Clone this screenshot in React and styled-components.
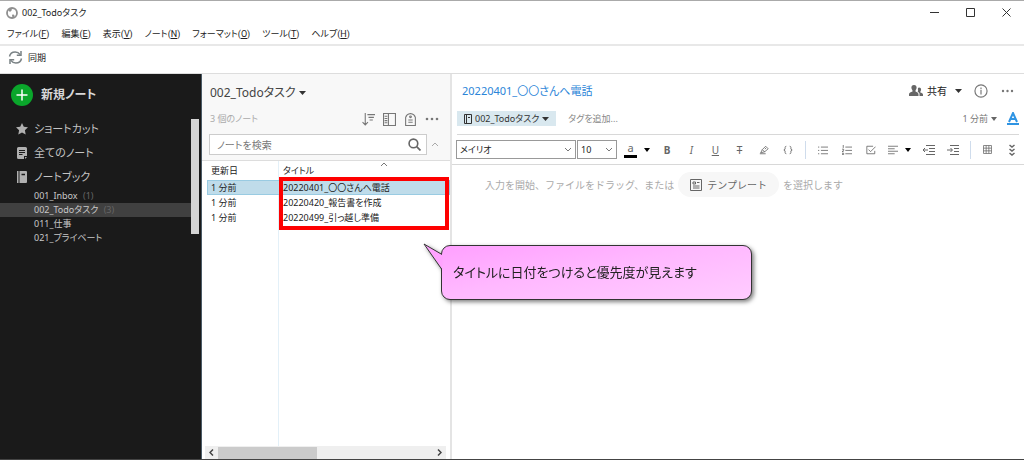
import React, { useState } from "react";
import styled, { createGlobalStyle, css } from "styled-components";

const GlobalStyle = createGlobalStyle`
  * { box-sizing: border-box; }
  body {
    margin: 0;
    background: #fff;
    color: #222;
    font-family: "Noto Sans", "Noto Sans CJK JP", sans-serif;
    font-feature-settings: "palt";
    font-size: 11px;
    line-height: 16px;
  }
  button, input, select {
    margin: 0;
    padding: 0;
    border: 0;
    background: none;
    color: inherit;
    font: inherit;
    font-feature-settings: inherit;
  }
  a { color: inherit; text-decoration: none; }
  svg { display: block; flex: none; }
`;

const Window = styled.div`
  position: relative;
  display: flex;
  flex-direction: column;
  min-height: 100vh;
  border-top: 1px solid #aaa;
  border-bottom: 1px solid #444;
`;

const TitleBar = styled.header`
  display: flex;
  align-items: center;
  height: 23px;
  padding-left: 6px;

  h1 {
    flex: 1;
    margin: 0 0 0 4px;
    font-size: 9px;
    font-weight: 400;
  }
`;

const WindowButton = styled.button`
  display: flex;
  align-items: center;
  justify-content: center;
  width: 36px;
  height: 22px;
`;

const MenuBar = styled.nav`
  display: flex;
  gap: 12px;
  height: 22px;
  padding: 2px 7px;
  border-bottom: 2px solid #e8e8e8;
  font-family: Roboto, "Noto Sans CJK JP", sans-serif;
  font-size: 9px;
`;

const SyncBar = styled.div`
  display: flex;
  align-items: center;
  height: 28px;
  padding: 0 8px 4px;
  border-bottom: 1px solid #ddd;
`;

const SyncButton = styled.button`
  display: flex;
  align-items: center;
  gap: 5px;
  font-size: 9px;
`;

const Body = styled.div`
  display: flex;
  flex: 1;
`;

const Sidebar = styled.aside`
  display: flex;
  width: 202px;
  flex: none;
  background: #1a1a1a;
  border-right: 1px solid #4a5a66;
  color: #c4c4c4;
`;

const SidebarContent = styled.div`
  flex: 1;
  padding-top: 8px;
`;

const NewNote = styled.button`
  display: flex;
  align-items: center;
  gap: 8px;
  height: 26px;
  margin-bottom: 9px;
  padding-left: 11px;
  color: #d8d8d8;
  font-size: 12px;
  font-weight: 600;
`;

const SideLink = styled.a`
  display: flex;
  align-items: center;
  gap: 6px;
  height: 24px;
  padding-left: 16px;
  font-size: 11px;
`;

const Notebook = styled.a`
  display: block;
  height: 14px;
  padding-left: 34px;
  line-height: 14px;
  font-size: 9px;
  color: #c8c8c8;

  ${({ $selected }) =>
    $selected &&
    css`
      background: #404040;
    `}

  span {
    margin-left: 3px;
    color: #666;
  }
`;

const SideScroll = styled.div`
  width: 8px;
  height: 115px;
  margin: 45px 2px 0 0;
  background: #d4d4d4;
`;

const ListPane = styled.section`
  display: flex;
  flex-direction: column;
  width: 250px;
  flex: none;
  border-right: 2px solid #e4e4e4;
`;

const ListHeader = styled.div`
  display: flex;
  flex-direction: column;
  padding: 8px 11px 5px 7px;
  background: #f8f8f8;
  border-bottom: 1px solid #ddd;
`;

const ListTitle = styled.button`
  display: flex;
  align-items: center;
  align-self: flex-start;
  gap: 3px;
  height: 22px;
  padding-left: 1px;
  color: #444;
  font-size: 12px;
`;

const CountRow = styled.div`
  display: flex;
  align-items: center;
  gap: 8px;
  height: 30px;
  padding-left: 1px;
  color: #aaa;
  font-size: 9px;

  > span { flex: 1; }
`;

const IconButton = styled.button`
  display: flex;
  align-items: center;
  justify-content: center;
  color: ${({ $color }) => $color || "#777"};
`;

const SearchRow = styled.div`
  display: flex;
  align-items: center;
  gap: 4px;
  color: #666;
`;

const SearchBox = styled.label`
  display: flex;
  align-items: center;
  flex: 1;
  height: 21px;
  padding: 0 5px 0 7px;
  background: #fff;
  border: 1px solid #ccc;

  input {
    flex: 1;
    min-width: 0;
    outline: 0;
    font-size: 10px;
  }
  input::placeholder { color: #777; }
`;

const TableArea = styled.div`
  position: relative;
  flex: 1;
  margin-left: 5px;
  background: linear-gradient(#e3f0f8, #e3f0f8) 71px 0 / 1px 100% no-repeat;
`;

const NoteTable = styled.table`
  width: 100%;
  table-layout: fixed;
  border-collapse: collapse;
  font-size: 9px;
  line-height: 15px;
  color: #222;

  th, td {
    height: 15px;
    padding: 0 4px;
    text-align: left;
    font-weight: 400;
    white-space: nowrap;
  }
  th { height: 19px; }
  th:first-child { width: 72px; }
  th svg { position: absolute; top: 1px; left: 173px; }
`;

const NoteRow = styled.tr`
  background: ${({ $selected }) => ($selected ? "#bfdcea" : "none")};
  outline: ${({ $selected }) => ($selected ? "1px solid #99cbe2" : "none")};
  outline-offset: -1px;
`;

const Highlight = styled.div`
  position: absolute;
  top: 16px;
  left: 72px;
  right: 1px;
  height: 53px;
  border: 4px solid #fe0000;
  pointer-events: none;
`;

const BottomScroll = styled.div`
  display: flex;
  align-items: center;
  height: 13px;
  margin: 0 4px 0 3px;
  background: #efefef;

  button { width: 13px; display: flex; justify-content: center; }
  div { flex: 1; height: 12px; }
  div::before {
    content: "";
    display: block;
    width: 46%;
    height: 12px;
    background: #cbcbcb;
  }
`;

const Editor = styled.main`
  flex: 1;
  min-width: 0;
`;

const EditorHead = styled.div`
  display: flex;
  align-items: center;
  height: 33px;
  padding: 0 10px;

  h2 {
    flex: 1;
    margin: 0;
    color: #2b85d8;
    font-size: 11px;
    font-weight: 400;
  }
`;

const ShareButton = styled.button`
  display: flex;
  align-items: center;
  gap: 4px;
  margin-right: 12px;
  font-size: 10px;

  svg:last-child { margin-left: 4px; }
`;

const MetaRow = styled.div`
  display: flex;
  align-items: center;
  height: 28px;
  margin: 0 5px;
  padding-bottom: 4px;
  border-bottom: 1px solid #d8d8d8;
  font-size: 9px;
`;

const NotebookTag = styled.button`
  display: flex;
  align-items: center;
  gap: 3px;
  height: 15px;
  margin-right: 12px;
  padding: 0 7px;
  background: #d9e8ef;
  color: #333;
`;

const TagInput = styled.input`
  flex: 1;
  min-width: 0;
  outline: 0;
  &::placeholder { color: #888; }
`;

const Updated = styled.button`
  display: flex;
  align-items: center;
  gap: 3px;
  margin-right: 10px;
  color: #777;
`;

const FormatBar = styled.div`
  display: flex;
  align-items: center;
  height: 30px;
  padding: 0 5px 0 4px;
  border-bottom: 1px solid #d8d8d8;
  font-size: 10px;
`;

const SelectBox = styled.span`
  position: relative;
  width: ${({ $width }) => $width}px;
  height: 19px;
  margin-right: 1px;
  border: 1px solid #999;

  select {
    width: 100%;
    height: 17px;
    padding-left: 3px;
    appearance: none;
    font-size: 9px;
    line-height: 16px;
  }
  svg { position: absolute; top: 6px; right: 3px; pointer-events: none; }
`;

const FormatButtons = styled.div`
  display: flex;
  align-items: center;
  justify-content: space-between;
  flex: 1;
  margin-left: 6px;
  color: #666;
`;

const FormatButton = styled(IconButton)`
  gap: 7px;
  height: 18px;
  min-width: 14px;
  color: #666;
`;

const TextColor = styled.span`
  width: 13px;
  height: 16px;
  border-bottom: 3px solid #000;
  font-size: 11px;
  line-height: 12px;
`;

const Divider = styled.span`
  width: 1px;
  height: 18px;
  background: #cfdcec;
`;

const NoteBody = styled.div`
  display: flex;
  align-items: center;
  gap: 4px;
  padding: 7px 0 0 33px;
  color: #aaa;
  font-size: 10px;
  font-feature-settings: normal;
`;

const TemplateButton = styled.button`
  display: flex;
  align-items: center;
  gap: 5px;
  height: 25px;
  padding: 0 12px;
  background: #f7f7f7;
  border-radius: 13px;
  color: #666;
`;

const Callout = styled.div`
  position: absolute;
  top: 244px;
  left: 441px;
  width: 311px;
  padding: 18px 11px;
  border: 1px solid #333;
  border-radius: 9px;
  background: linear-gradient(170deg, #ffa0ff, #ffb8ff 45%, #ffccff);
  filter: drop-shadow(2px 2px 2px rgba(0, 0, 0, 0.5));
  color: #222;
  font-size: 13px;
  line-height: 17px;

  p { margin: 0; white-space: nowrap; }
  svg { position: absolute; top: -3px; left: -19px; }
`;

const Caret = ({ color = "#333", size = 7 }) => (
  <svg width={size} height="4" viewBox="0 0 8 4" preserveAspectRatio="none">
    <path d="M0 0h8L4 4z" fill={color} />
  </svg>
);

const Chevron = ({ up, color = "#777" }) => (
  <svg width="8" height="5" viewBox="0 0 8 5" fill="none" stroke={color}>
    <path d={up ? "M1 4l3-3 3 3" : "M1 1l3 3 3-3"} />
  </svg>
);

const Dots = () => (
  <svg width="14" height="4" viewBox="0 0 14 4" fill="currentColor">
    <circle cx="2" cy="2" r="1.3" />
    <circle cx="7" cy="2" r="1.3" />
    <circle cx="12" cy="2" r="1.3" />
  </svg>
);

const Glyph = ({ size = 12, width, children }) => (
  <svg
    width={size}
    height={size}
    viewBox="0 0 12 12"
    fill="none"
    stroke="currentColor"
    strokeWidth={width || 1}
  >
    {children}
  </svg>
);

const menus = [
  ["ファイル", "F"],
  ["編集", "E"],
  ["表示", "V"],
  ["ノート", "N"],
  ["フォーマット", "O"],
  ["ツール", "T"],
  ["ヘルプ", "H"],
];

const notebooks = [
  { name: "001_Inbox", count: 1 },
  { name: "002_Todoタスク", count: 3 },
  { name: "011_仕事" },
  { name: "021_プライベート" },
];

const notes = ["20220401_〇〇さんへ電話", "20220420_報告書を作成", "20220499_引っ越し準備"];

const App = () => {
  const [notebook, setNotebook] = useState(1);
  const [note, setNote] = useState(0);

  return (
    <>
      <GlobalStyle />
      <Window>
        <TitleBar>
          <svg width="12" height="12" viewBox="0 0 12 12">
            <circle cx="6" cy="6" r="5" fill="#fff" stroke="#8f8f8f" strokeWidth="1.8" />
            <path d="M2 3l3-2 1 2-2 2zM6 8c1-.8 2-.6 2.500.3L8 11H6.500z" fill="#8f8f8f" />
          </svg>
          <h1>002_Todoタスク</h1>
          <WindowButton aria-label="最小化">
            <svg width="9" height="9" stroke="#333"><path d="M0 4.500h9" /></svg>
          </WindowButton>
          <WindowButton aria-label="最大化">
            <svg width="9" height="9" fill="none" stroke="#333"><path d="M.5.5h8v8h-8z" /></svg>
          </WindowButton>
          <WindowButton aria-label="閉じる">
            <svg width="9" height="9" stroke="#333"><path d="M.5.5l8 8M8.500.5l-8 8" /></svg>
          </WindowButton>
        </TitleBar>

        <MenuBar>
          {menus.map(([label, key]) => (
            <a href="#menu" key={key}>{label}(<u>{key}</u>)</a>
          ))}
        </MenuBar>

        <SyncBar>
          <SyncButton>
            <svg width="15" height="15" viewBox="0 0 15 15" fill="none" stroke="#7a8285" strokeWidth="1.500">
              <path d="M1.500 6.500C2 3.800 4.200 2 7.200 2c2 0 3.700.8 5 2.600M13.500 8.500c-.5 2.700-2.700 4.500-5.700 4.500-2 0-3.700-.8-5-2.600" />
              <path d="M13 1v4.200H8.800M2 14V9.800h4.200" />
            </svg>
            同期
          </SyncButton>
        </SyncBar>

        <Body>
          <Sidebar>
            <SidebarContent>
              <NewNote>
                <svg width="22" height="22" viewBox="0 0 22 22">
                  <circle cx="11" cy="11" r="11" fill="#0aa62b" />
                  <path d="M11 5.500v11M5.500 11h11" stroke="#fff" strokeWidth="1.500" />
                </svg>
                新規ノート
              </NewNote>
              <SideLink href="#shortcuts">
                <svg width="12" height="12" viewBox="0 0 12 12" fill="#b0b0b0">
                  <path d="M6 0l1.800 3.800 4.200.5-3.100 2.900.8 4.300L6 9.400l-3.700 2.100.8-4.300L0 4.300l4.200-.5z" />
                </svg>
                ショートカット
              </SideLink>
              <SideLink href="#notes">
                <svg width="12" height="12" viewBox="0 0 12 12">
                  <path d="M2.500 0h7q1.500 0 1.500 1.500V9H8v3H2.500Q1 12 1 10.500v-9Q1 0 2.500 0zM9 10h2l-2 2z" fill="#b0b0b0" />
                  <path d="M3 3.500h6M3 5.500h6M3 7.500h3.500" stroke="#1a1a1a" />
                </svg>
                全てのノート
              </SideLink>
              <SideLink href="#notebooks">
                <svg width="12" height="12" viewBox="0 0 12 12">
                  <path d="M1 0h1.500v12H1zM3.500 0H10q1 0 1 1v10q0 1-1 1H3.500z" fill="#b0b0b0" />
                  <path d="M5.500 3.500H9" stroke="#1a1a1a" strokeWidth="1.500" />
                </svg>
                ノートブック
              </SideLink>
              {notebooks.map(({ name, count }, i) => (
                <Notebook
                  href={`#notebook-${i}`}
                  key={name}
                  $selected={i === notebook}
                  onClick={() => setNotebook(i)}
                >
                  {name} {count && <span>({count})</span>}
                </Notebook>
              ))}
            </SidebarContent>
            <SideScroll />
          </Sidebar>

          <ListPane>
            <ListHeader>
              <ListTitle>002_Todoタスク<Caret /></ListTitle>
              <CountRow>
                <span>3 個のノート</span>
                <IconButton aria-label="並べ替え">
                  <Glyph size={13}><path d="M3 0v11M.5 8.500L3 11l2.500-2.500M5 1.500h7M6 4h5M7 6.500h3" /></Glyph>
                </IconButton>
                <IconButton aria-label="表示">
                  <Glyph size={13}><path d="M.5.5h11v11H.5zM5 .5v11M1.500 3H4M1.500 5H4M1.500 7H4M1.500 9H4" /></Glyph>
                </IconButton>
                <IconButton aria-label="タグ">
                  <Glyph size={13}>
                    <path d="M1.500 11.500V4Q2.500 1 6 .5 9.500 1 10.500 4v7.500zM4 6.500h4M4 8.500h4" />
                    <circle cx="6" cy="3.500" r=".8" />
                  </Glyph>
                </IconButton>
                <IconButton aria-label="その他"><Dots /></IconButton>
              </CountRow>
              <SearchRow>
                <SearchBox>
                  <input aria-label="ノートを検索" placeholder="ノートを検索" />
                  <Glyph size={13} width={1.5}>
                    <circle cx="5" cy="5" r="4" />
                    <path d="M8 8l3.500 3.500" />
                  </Glyph>
                </SearchBox>
                <IconButton aria-label="閉じる"><Chevron up color="#aaa" /></IconButton>
              </SearchRow>
            </ListHeader>
            <TableArea>
              <NoteTable>
                <thead>
                  <tr><th>更新日</th><th>タイトル<Chevron up /></th></tr>
                </thead>
                <tbody>
                  {notes.map((title, i) => (
                    <NoteRow key={title} $selected={i === note} onClick={() => setNote(i)}>
                      <td>1 分前</td>
                      <td>{title}</td>
                    </NoteRow>
                  ))}
                </tbody>
              </NoteTable>
              <Highlight />
            </TableArea>
            <BottomScroll>
              <button aria-label="左へ">
                <svg width="5" height="7" fill="none" stroke="#444" strokeWidth="1.500"><path d="M4 .5l-3 3 3 3" /></svg>
              </button>
              <div />
              <button aria-label="右へ">
                <svg width="5" height="7" fill="none" stroke="#444" strokeWidth="1.500"><path d="M1 .5l3 3-3 3" /></svg>
              </button>
            </BottomScroll>
          </ListPane>

          <Editor>
            <EditorHead>
              <h2>{notes[note]}</h2>
              <ShareButton>
                <svg width="14" height="12" viewBox="0 0 14 12" fill="#666">
                  <path d="M5 0c1.800 0 2.700 1.200 2.600 2.800C7.500 4 7 4.800 6.500 5.400v1.200c1.500.6 3 1.200 3 2.600V11H0V9.200C0 7.800 1.800 7.200 3.500 6.600V5.400C3 4.800 2.500 4 2.400 2.800 2.300 1.200 3.200 0 5 0z" />
                  <path d="M10 2.500c1.400 0 2.100.8 2.100 2.100 0 1-.4 1.600-.8 2.100v.8c1.200.4 2.700.9 2.700 2V11h-3.500V9c0-1-.8-1.800-1.800-2.300.5-.8.500-1.500.2-2.200C8.800 3.200 9.200 2.500 10 2.500z" />
                </svg>
                共有
                <Caret />
              </ShareButton>
              <IconButton aria-label="ノート情報">
                <Glyph size={14}>
                  <circle cx="6" cy="6" r="5.200" />
                  <path d="M6 5v4M6 3v1.200" />
                </Glyph>
              </IconButton>
              <IconButton aria-label="その他">
                <svg width="26" height="4" viewBox="0 0 26 4" fill="currentColor">
                  <circle cx="15" cy="2" r="1.200" />
                  <circle cx="19.500" cy="2" r="1.200" />
                  <circle cx="24" cy="2" r="1.200" />
                </svg>
              </IconButton>
            </EditorHead>

            <MetaRow>
              <NotebookTag>
                <svg width="8" height="10" viewBox="0 0 8 10" fill="none" stroke="#333">
                  <path d="M.5.5h7v9h-7zM2.500.5v9M4 3.500h2" />
                </svg>
                002_Todoタスク
                <Caret />
              </NotebookTag>
              <TagInput aria-label="タグを追加" placeholder="タグを追加..." />
              <Updated>1 分前<Caret color="#666" size={6} /></Updated>
              <IconButton aria-label="書式" $color="#2f94e3">
                <svg width="12" height="13" viewBox="0 0 12 13" fill="none" stroke="currentColor">
                  <path d="M2 10L6 1l4 9M3.500 7h5" strokeWidth="2" />
                  <path d="M0 12h12" strokeWidth="2" />
                </svg>
              </IconButton>
            </MetaRow>

            <FormatBar>
              <SelectBox $width={120}>
                <select aria-label="フォント"><option>メイリオ</option></select>
                <Chevron />
              </SelectBox>
              <SelectBox $width={40}>
                <select aria-label="サイズ"><option>10</option></select>
                <Chevron />
              </SelectBox>
              <FormatButtons>
                <FormatButton aria-label="文字色"><TextColor>a</TextColor><Caret color="#000" size={6} /></FormatButton>
                <FormatButton><b>B</b></FormatButton>
                <FormatButton><i>I</i></FormatButton>
                <FormatButton><u>U</u></FormatButton>
                <FormatButton><s>T</s></FormatButton>
                <FormatButton aria-label="ハイライト">
                  <Glyph size={10}><path d="M1 10.500h7M2 9.500l2-4 4-4 3 3-4 3.500zM4 5.500l3 3M7 5l1.500-1.500" /></Glyph>
                </FormatButton>
                <FormatButton aria-label="コード">
                  <Glyph size={10}><path d="M4 1.500Q2.500 1.500 2.500 3v2L1 6l1.500 1v2Q2.500 10.500 4 10.500M8 1.500Q9.500 1.500 9.500 3v2L11 6 9.500 7v2Q9.500 10.500 8 10.500" /></Glyph>
                </FormatButton>
                <Divider />
                <FormatButton aria-label="箇条書き">
                  <Glyph size={10}><path d="M0 2.500h1.500M0 6.500h1.500M0 10.500h1.500M3.500 2.500H12M3.500 6.500H12M3.500 10.500H12" /></Glyph>
                </FormatButton>
                <FormatButton aria-label="番号付きリスト">
                  <Glyph size={10}><path d="M1.500 0v3.500M0 5h2v1.500L0 8h2M0 10h2v1.500H0M4 2.500h8M4 6.500h8M4 10.500h8" /></Glyph>
                </FormatButton>
                <FormatButton aria-label="チェックボックス">
                  <Glyph size={10}><path d="M8.500 1.500H1v9h9.500V7M3 5.500l2.500 2.500L11.500 2" /></Glyph>
                </FormatButton>
                <FormatButton aria-label="配置">
                  <Glyph size={10}><path d="M0 1.500h12M0 4.500h8M0 7.500h12M0 10.500h8" /></Glyph>
                  <Caret color="#000" size={6} />
                </FormatButton>
                <FormatButton aria-label="インデント解除">
                  <Glyph><path d="M3 1.500h9M6 4.500h6M6 7.500h6M3 10.500h9M0 6h5M2 4L0 6l2 2" /></Glyph>
                </FormatButton>
                <FormatButton aria-label="インデント">
                  <Glyph><path d="M3 1.500h9M7 4.500h5M7 7.500h5M3 10.500h9M0 6h5M3.500 4l2 2-2 2" /></Glyph>
                </FormatButton>
                <Divider />
                <FormatButton aria-label="表">
                  <Glyph size={9}><path d="M.7.7h10.600v10.600H.7zM.7 4.200h10.600M.7 7.800h10.600M4.200.7v10.600M7.800.7v10.600" /></Glyph>
                </FormatButton>
                <FormatButton aria-label="もっと見る">
                  <Glyph width={1.5}><path d="M3.500 1L6 3 8.500 1M3.500 5L6 7l2.500-2M3.500 9L6 11l2.500-2" /></Glyph>
                </FormatButton>
              </FormatButtons>
            </FormatBar>

            <NoteBody>
              入力を開始、ファイルをドラッグ、または
              <TemplateButton>
                <Glyph>
                  <path d="M.5.5h11v11H.5zM3 3h2.500v2H3zM7 3.500h2.500M3 7h6.500M3 9h6.500" />
                </Glyph>
                テンプレート
              </TemplateButton>
              を選択します
            </NoteBody>
          </Editor>
        </Body>

        <Callout>
          <svg width="21" height="28" viewBox="0 0 21 28">
            <path d="M20 12L1 1l18 25z" fill="#ffa3ff" />
            <path d="M19 11.500L1 1l17.500 25" fill="none" stroke="#333" />
          </svg>
          <p>タイトルに日付をつけると優先度が見えます</p>
        </Callout>
      </Window>
    </>
  );
};

export default App;
